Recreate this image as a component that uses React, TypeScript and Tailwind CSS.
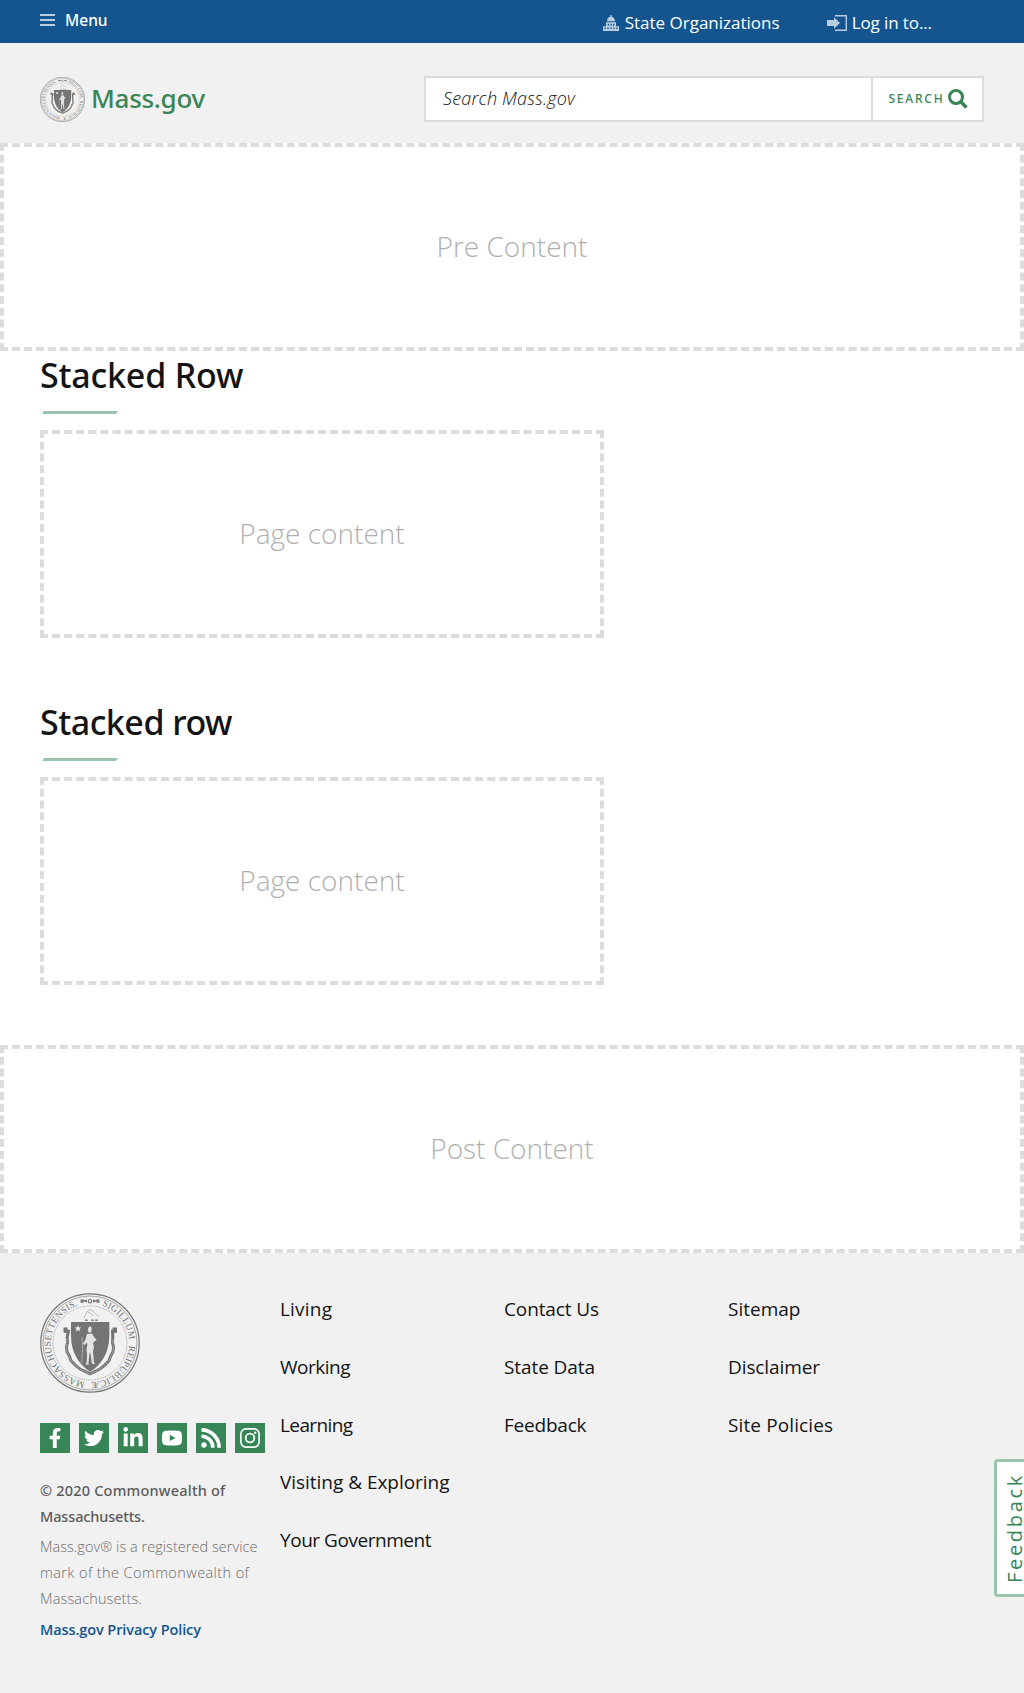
import type { ReactNode } from "react";
import { FaFacebookF, FaLinkedinIn, FaTwitter } from "react-icons/fa";

const medium = "font-['Noto_Sans',sans-serif] font-medium";

function Seal({ className, id }: { className: string; id: string }) {
  return (
    <svg viewBox="0 0 100 100" className={className} role="img" aria-label="Massachusetts State Seal">
      <g fill="none" stroke="#747474">
        <circle cx="50" cy="50" r="49.2" strokeWidth="1.2" />
        <circle cx="50" cy="50" r="47" strokeWidth="0.6" />
        <circle cx="50" cy="50" r="37" strokeWidth="0.9" strokeDasharray="0.9 0.9" stroke="#9a9a9a" />
      </g>
      <path id={id} d="M62.100 12.700A39.200 39.200 0 1 1 40 12.100" fill="none" />
      <text fill="#747474" fontFamily="Liberation Serif, serif" fontSize="9.300" wordSpacing="3">
        <textPath href={`#${id}`} textLength="221" lengthAdjust="spacing">
          SIGILLUM REIPUBLICÆ MASSACHUSETTENSIS.
        </textPath>
      </text>
      <g fill="#747474">
        <path d="M42 8l5 -1.500v3zM58 8l-5 -1.500v3zM40.500 6.500h3v3.200h-3zM56.500 6.500h3v3.200h-3z" />
        <circle cx="50" cy="8.200" r="1.700" fill="none" stroke="#747474" strokeWidth="1.100" />
        <path d="M45 26.500h3v1.600h-3zM51 26.500h3v1.600h-3zM55 26.500h3v1.600h-3z" opacity="0.800" />
        <path d="M44 25c2-4 2-7 6-8.500 3 1 5 4 9 7M47 18.500l7 4" fill="none" stroke="#b5b5b5" strokeWidth="0.900" />
        <path d="M31 29h38.300v14C69.300 60 61 72 50.100 78.800 39.500 72 31 60 31 43z" />
      </g>
      <g fill="none">
        <path
          d="M24 38.300h4.500l-1.300 5.500.3 5.500-1 4.500.5 5 2.500 4.500 1.500 4.500 4.500 4.500 5 4 4.500 2 5 2.500 5-2.500 4.500-2 5-4 4.500-4.500 1.500-4.500 2.500-4.500.5-5-1-4.500.3-5.500-.3-5.500h4.500"
          stroke="#747474"
          strokeWidth="3"
        />
        <path d="M23.500 37h4M72.500 37h4.500" stroke="#747474" strokeWidth="5" />
        <path
          d="M27 46l-.7 8 .7 5 2.500 4.500 1.500 4.500 4.500 4.500 5 4 4.500 2 5 2.500 5-2.500 4.500-2 5-4 4.500-4.500 1.500-4.500 2.500-4.500.5-5-.7-8"
          stroke="#c6c6c6"
          strokeWidth="0.800"
          strokeDasharray="1.500 1"
        />
      </g>
      <path d="M38 32l.9 2.400h2.600l-2.100 1.600.8 2.500-2.200-1.500-2.200 1.500.8-2.500-2.100-1.600h2.600z" fill="#f1f1f1" />
      <g fill="#e4e4e4">
        <path d="M48.500 34.500l2-1.500 1.200 2-.4 4-2.200.8-1.400-2z" />
        <path d="M47 41l5-.5 2.300 4 2.200 2-.5 1-2.500 1.500-.3 2 .8 3-1 4 .5 6 .5 5.500 1 1.500h-3l-1.200-8-.8-4-.8 4-.7 7 .3 1.500h-3.500l1.300-2 .5-8-.6-5 .8-4-.3-3-2.500 2.500-1.500-1.500 2.500-4z" />
      </g>
      <path d="M42 44l.6 12-.8 14" fill="none" stroke="#c4c4c4" strokeWidth="0.700" />
    </svg>
  );
}

function Placeholder({ children }: { children: ReactNode }) {
  return (
    <div className="flex h-[208px] items-center justify-center border-4 border-dashed border-[#dcdcdc] pb-[3px] text-[28px] leading-9 font-light text-[#b0b0b0]">
      {children}
    </div>
  );
}

function StackedRow({ title, tracking }: { title: string; tracking: string }) {
  return (
    <section className="mb-[60px] px-10">
      <h2 className={`${medium} h-[46px] text-[34px] leading-[48px] text-[#141414] ${tracking}`}>{title}</h2>
      <div className="mt-[14px] mb-4 ml-[3px] h-[3px] w-[74px] -skew-x-[32deg] bg-[#98c4ab]" />
      <div className="w-[564px]">
        <Placeholder>Page content</Placeholder>
      </div>
    </section>
  );
}

function StateHouseIcon() {
  return (
    <svg viewBox="0 0 16 16" className="h-4 w-4 fill-[#b9cde0]">
      <path d="M7.300 0h1.400v1.600h-1.400zM4 6.300C4 3.500 5.500 1.700 8 1.500c2.500.2 4 2 4 4.800zM3 7.200h10v4h3V16H0v-4.800h3z" />
      <path
        d="M4.700 8.700h1.300v2H4.700zM7.400 8.700h1.300v2H7.400zM10 8.700h1.300v2H10zM1.500 12.500h1.300v1.600H1.500zM4.400 12.500h1.300v1.600H4.400zM7.300 12.500h1.400v1.600H7.300zM10.300 12.500h1.300v1.600h-1.300zM13.200 12.500h1.300v1.600h-1.300z"
        fill="#14558f"
      />
    </svg>
  );
}

function LoginIcon() {
  return (
    <svg viewBox="0 0 20 16" className="h-4 w-5 fill-[#b9cde0]">
      <path d="M0 5h7V2.200L13 8l-6 5.800V11H0z" />
      <path d="M8 .7h11.300v14.600H8" fill="none" stroke="#b9cde0" strokeWidth="1.400" />
    </svg>
  );
}

function SearchIcon() {
  return (
    <svg viewBox="0 0 20 20" className="h-5 w-5 shrink-0" fill="none" stroke="#388557">
      <circle cx="8" cy="8" r="6.500" strokeWidth="3" />
      <path d="M12.500 12.500l6 6" strokeWidth="3.600" />
    </svg>
  );
}

const socials: { name: string; icon: ReactNode }[] = [
  {
    name: "Facebook",
    icon: <FaFacebookF className="h-5 w-5" />,
  },
  { name: "Twitter", icon: <FaTwitter className="h-5 w-5" /> },
  { name: "LinkedIn", icon: <FaLinkedinIn className="h-[22px] w-[22px]" /> },
  {
    name: "YouTube",
    icon: (
      <svg viewBox="0 0 20 16" className="h-4 w-5">
        <path
          fillRule="evenodd"
          d="M4 .8Q10 0 16 .8q3.500.3 3.800 3.500.4 3.700 0 7.400-.3 3-3.800 3.500-6 .8-12 0Q.5 14.800.2 11.700q-.4-3.700 0-7.400Q.5 1.200 4 .8zM7.800 4.800v6.200L13.600 7.900z"
          fill="currentColor"
        />
      </svg>
    ),
  },
  {
    name: "RSS",
    icon: (
      <svg viewBox="0 0 20 20" className="h-5 w-5" fill="none" stroke="currentColor" strokeWidth="3.600">
        <circle cx="3" cy="17" r="2.700" fill="currentColor" stroke="none" />
        <path d="M.5 8.200A11.300 11.300 0 0 1 11.800 19.700M.5 1.900A17.600 17.600 0 0 1 18.100 19.700" />
      </svg>
    ),
  },
  {
    name: "Instagram",
    icon: (
      <svg viewBox="0 0 20 20" className="h-5 w-5" fill="none" stroke="currentColor">
        <rect x="0.900" y="0.900" width="18.200" height="18.200" rx="5" strokeWidth="1.600" />
        <circle cx="10" cy="10" r="4.300" strokeWidth="1.800" />
        <circle cx="15.200" cy="4.800" r="1.200" fill="currentColor" stroke="none" />
      </svg>
    ),
  },
];

const linkColumns: [string, string][][] = [
  [
    ["Living", "tracking-[0.2px]"],
    ["Working", "tracking-[-0.5px]"],
    ["Learning", "tracking-[-0.6px]"],
    ["Visiting & Exploring", "tracking-[-0.03px]"],
    ["Your Government", "tracking-[-0.46px]"],
  ],
  [
    ["Contact Us", "tracking-[-0.12px]"],
    ["State Data", "tracking-[-0.09px]"],
    ["Feedback", "tracking-[-0.22px]"],
  ],
  [
    ["Sitemap", ""],
    ["Disclaimer", "tracking-[-0.1px]"],
    ["Site Policies", "tracking-[0.11px]"],
  ],
];

export default function App() {
  return (
    <div className="relative h-[1693px] overflow-hidden bg-white font-['Open_Sans',sans-serif] text-[#141414]">
      <div className="flex h-[43px] items-start bg-[#14558f] px-10 text-white">
        <button className="flex items-center pt-2">
          <span className="mb-px flex w-[15px] flex-col gap-[3px]">
            <span className="h-[2px] bg-[#b9cde0]" />
            <span className="h-[2px] bg-[#b9cde0]" />
            <span className="h-[2px] bg-[#b9cde0]" />
          </span>
          <span className={`${medium} ml-[10px] text-[15.5px] leading-6`}>Menu</span>
        </button>
        <div className="ml-auto flex pt-[11px] pr-[52px] text-[17px] leading-6">
          <span className="flex w-[224px]">
            <span className="mt-1 mr-[6px]">
              <StateHouseIcon />
            </span>
            State Organizations
          </span>
          <span className="flex tracking-[-0.1px]">
            <span className="mt-1 mr-[5px]">
              <LoginIcon />
            </span>
            Log in to...
          </span>
        </div>
      </div>

      <header className="flex h-[100px] items-start justify-between bg-[#f1f1f1] px-10 pt-[33px]">
        <div className="flex items-center pt-px">
          <Seal className="h-[45px] w-[45px]" id="seal-ring-header" />
          <span className={`${medium} ml-[6px] pb-[3px] text-[26px] leading-8 tracking-[-0.3px] text-[#388557]`}>
            Mass.gov
          </span>
        </div>
        <div className="flex h-[46px] w-[560px] border-2 border-[#dcdcdc] bg-white">
          <div className="flex flex-1 items-center pb-px pl-[17px] text-[18px] font-light tracking-[0.2px] italic">
            Search Mass.gov
          </div>
          <button className="flex w-[111px] items-center border-l-2 border-[#dcdcdc] pl-3 text-[#388557]">
            <span className={`${medium} w-[63px] text-[12px] tracking-[1.800px]`}>SEARCH</span>
            <SearchIcon />
          </button>
        </div>
      </header>

      <main>
        <Placeholder>Pre Content</Placeholder>
        <StackedRow title="Stacked Row" tracking="tracking-[-0.2px]" />
        <StackedRow title="Stacked row" tracking="tracking-[-0.5px]" />
        <Placeholder>Post Content</Placeholder>
      </main>

      <footer className="flex h-[440px] bg-[#f1f1f1] pt-10 pl-10">
        <div className="w-[240px] shrink-0 text-[14.5px] leading-[26px] whitespace-nowrap">
          <Seal className="h-[100px] w-[100px]" id="seal-ring-footer" />
          <div className="mt-[30px] flex gap-[9px]">
            {socials.map((s) => (
              <a key={s.name} aria-label={s.name} className="flex h-[30px] w-[30px] items-center justify-center bg-[#388557] text-white">
                {s.icon}
              </a>
            ))}
          </div>
          <p className={`${medium} mt-6 text-[#5b5b5b]`}>
            <span className="tracking-[0.2px]">© 2020 Commonwealth of</span>
            <br />
            <span className="tracking-[-0.14px]">Massachusetts.</span>
          </p>
          <p className="mt-[5px] font-light text-[#6b6b6b]">
            <span className="tracking-[0.04px]">Mass.gov® is a registered service</span>
            <br />
            <span className="tracking-[0.41px]">mark of the Commonwealth of</span>
            <br />
            <span className="tracking-[0.15px]">Massachusetts.</span>
          </p>
          <a className="mt-[5px] block font-semibold tracking-[-0.1px] text-[#14558f]">Mass.gov Privacy Policy</a>
        </div>
        <nav className="-mt-3 flex">
          {linkColumns.map((column) => (
            <ul key={column[0][0]} className="w-[224px] text-[19px]">
              {column.map(([label, tracking]) => (
                <li key={label} className={`h-[57.8px] leading-[57.8px] ${tracking}`}>
                  {label}
                </li>
              ))}
            </ul>
          ))}
        </nav>
      </footer>

      <button className="absolute top-[1459px] left-[994px] flex h-[138px] w-[50px] items-center rounded-[4px] border-[3px] border-[#98c4ab] bg-white pl-1 text-[#388557]">
        <span className="rotate-180 text-[20px] leading-7 tracking-[2.700px] [writing-mode:vertical-rl]">Feedback</span>
      </button>
    </div>
  );
}
